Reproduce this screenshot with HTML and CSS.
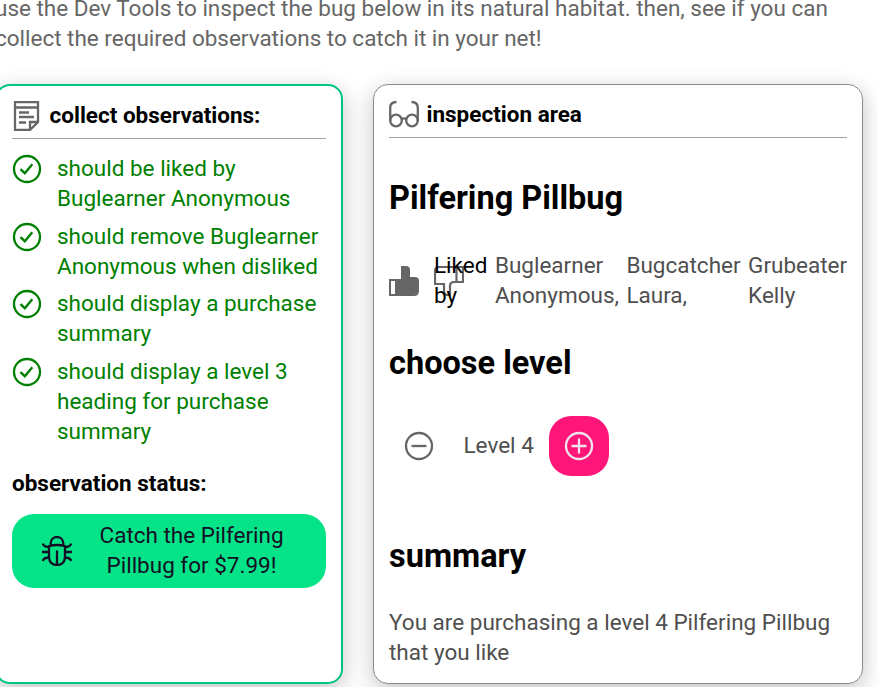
FILE: index.html
```html
<!DOCTYPE html>
<html lang="en">
<head>
<meta charset="utf-8">
<title>Pilfering Pillbug</title>
<link rel="stylesheet" href="styles.css">
</head>
<body>
<svg class="defs" aria-hidden="true">
  <symbol id="check" viewBox="0 0 30 30"><circle cx="15" cy="15" r="13" fill="none" stroke="currentColor" stroke-width="2.300"/><path d="M8.500 15.200l4.300 4 7.500-9" fill="none" stroke="currentColor" stroke-width="2.400"/></symbol>
</svg>
<main class="page">
  <p class="intro">use the Dev Tools to inspect the bug below in its natural habitat. then, see if you can<br>collect the required observations to catch it in your net!</p>
  <div class="columns">
    <section class="card observations">
      <header class="card-header">
        <svg class="icon" viewBox="0 0 30 30" fill="none" stroke="currentColor" stroke-width="2.300"><path d="M3 1.200H26V21L18 29H3ZM3 6.500H26M18 29V21H26M7 11.500H17M7 16H22M7 21.500H14" /></svg>
        <h2>collect observations:</h2>
      </header>
      <ul class="checks">
        <li><svg class="icon"><use href="#check"/></svg><span>should be liked by<br>Buglearner Anonymous</span></li>
        <li><svg class="icon"><use href="#check"/></svg><span>should remove Buglearner<br>Anonymous when disliked</span></li>
        <li><svg class="icon"><use href="#check"/></svg><span>should display a purchase<br>summary</span></li>
        <li><svg class="icon"><use href="#check"/></svg><span>should display a level 3<br>heading for purchase<br>summary</span></li>
      </ul>
      <h2 class="status">observation status:</h2>
      <button class="catch">
        <svg class="icon" viewBox="0 0 30 30" fill="none" stroke="currentColor" stroke-width="2.300"><path d="M8.700 9V7.500C8.700 3.500 11.500 1 15 1S21.300 3.500 21.300 7.500V9M7 10.200Q15 7.800 23 10.200V21Q22.500 29 15 29T7 21ZM15 14.500V28M0 16H7M23 16H30M.8 7.500Q1.800 11 7 11M29.200 7.500Q28.200 11 23 11M.8 25Q1.800 21.500 7 21.500M29.200 25Q28.200 21.500 23 21.500"/></svg>
        <span>Catch the Pilfering<br>Pillbug for $7.99!</span>
      </button>
    </section>
    <section class="card inspection">
      <header class="card-header">
        <svg class="icon" viewBox="0 0 30 30" fill="none" stroke="currentColor" stroke-width="2.300"><circle cx="7" cy="20.500" r="5.800"/><circle cx="23" cy="20.500" r="5.800"/><path d="M12.500 19Q15 17.700 17.500 19M1.200 21V8Q1.200 2 7.500 2M28.800 21V8Q28.800 2 22.500 2"/></svg>
        <h2>inspection area</h2>
      </header>
      <h1>Pilfering Pillbug</h1>
      <div class="likes">
        <svg class="icon" viewBox="0 0 30 30"><path fill="currentColor" fill-rule="evenodd" d="M0 13H12V0H17Q21 0 21 4V11H26Q30 11 30 15V25Q30 30 25 30H0ZM2 15V28H6V15Z"/></svg>
        <svg class="icon" viewBox="0 0 30 30" fill="none" stroke="currentColor" stroke-width="2.200"><path d="M29 1H5Q1 1 1 5V18H10V25Q10 29 14 29H16V20Q16 16 20 16H29ZM22.500 1V16"/></svg>
        <span class="liked-label">Liked<br>by</span>
        <span>Buglearner<br>Anonymous,</span>
        <span>Bugcatcher<br>Laura,</span>
        <span>Grubeater<br>Kelly</span>
      </div>
      <h1>choose level</h1>
      <div class="level">
        <button class="step" aria-label="Decrease level"><svg class="icon" viewBox="0 0 30 30" fill="none" stroke="currentColor" stroke-width="2.300"><circle cx="15" cy="15" r="13"/><path d="M7.500 15H22.500"/></svg></button>
        <span class="value">Level 4</span>
        <button class="step step-up" aria-label="Increase level"><svg class="icon" viewBox="0 0 30 30" fill="none" stroke="currentColor" stroke-width="2.300"><circle cx="15" cy="15" r="13"/><path d="M7.500 15H22.500M15 7.500V22.500"/></svg></button>
      </div>
      <h1>summary</h1>
      <p>You are purchasing a level 4 Pilfering Pillbug<br>that you like</p>
    </section>
  </div>
</main>
</body>
</html>
```
FILE: styles.css
```css
* { box-sizing: border-box; }
html { overflow: hidden; height: 687px; background: #fff; }
body { margin: 0; height: 687px; overflow: hidden; font: 22.5px/30px Roboto, "Liberation Sans", sans-serif; color: #4f4f4f; }
h1, h2, p, ul { margin: 0; padding: 0; }
.defs { display: block; width: 0; height: 0; }
.page { margin: -7px 0 0 -5px; white-space: nowrap; }
.intro { color: #666; letter-spacing: -.01px; }
.columns { display: flex; gap: 30px; margin-top: 31px; }
.card { height: 600px; border-radius: 15px; background: #fff; box-shadow: 0 6px 22px rgba(0, 0, 0, .24); }
.observations { width: 348px; padding: 14px 15px; border: 2px solid #00c582; }
.inspection { width: 490px; padding: 14px 15px; border: 1px solid #8b8b8b; }
.icon { display: block; flex: none; width: 30px; height: 30px; color: #666; }
.card-header { display: flex; align-items: center; gap: 7.5px; height: 39px; padding-bottom: 7px; border-bottom: 1px solid #a4a4a4; }
.card-header h2 { margin-top: -2px; }
h2 { font-size: 22.5px; line-height: 30px; font-weight: 700; color: #000; }
.checks { list-style: none; display: flex; flex-direction: column; gap: 7.5px; margin-top: 14px; color: #008000; }
.checks li { display: flex; gap: 15px; }
.checks .icon { color: #008000; margin-top: 1px; }
.status { margin-top: 22px; }
button { border: 0; font: inherit; }
.catch { display: flex; align-items: center; width: 100%; height: 74px; margin-top: 16px; padding: 0 30px 2px; gap: 27.5px; border-radius: 22px; background: #05e388; color: #131025; text-align: center; }
.catch .icon { color: #131025; margin-top: 2px; }
h1 { font-size: 32.5px; line-height: 40px; font-weight: 700; color: #000; }
.inspection > h1 { margin-top: 40px; }
.likes { display: flex; align-items: center; height: 60px; margin-top: 32px; gap: 7.5px; }
.likes .icon { margin-top: 2px; }
.likes .icon + .icon { margin-left: 7.5px; margin-right: -37.5px; }
.liked-label { position: relative; color: #000; }
.inspection > .likes + h1 { margin-top: 33px; }
.level { display: flex; align-items: center; margin-top: 33px; height: 60px; }
.step { display: grid; place-items: center; width: 60px; height: 60px; padding: 0; border-radius: 22px; background: transparent; }
.value { margin: -2px 15px 0 14.5px; }
.step-up { background: #ff1678; }
.step-up .icon { color: #eee5ee; }
.inspection > .level + h1 { margin-top: 60px; }
.inspection > p { margin-top: 31px; }
```
